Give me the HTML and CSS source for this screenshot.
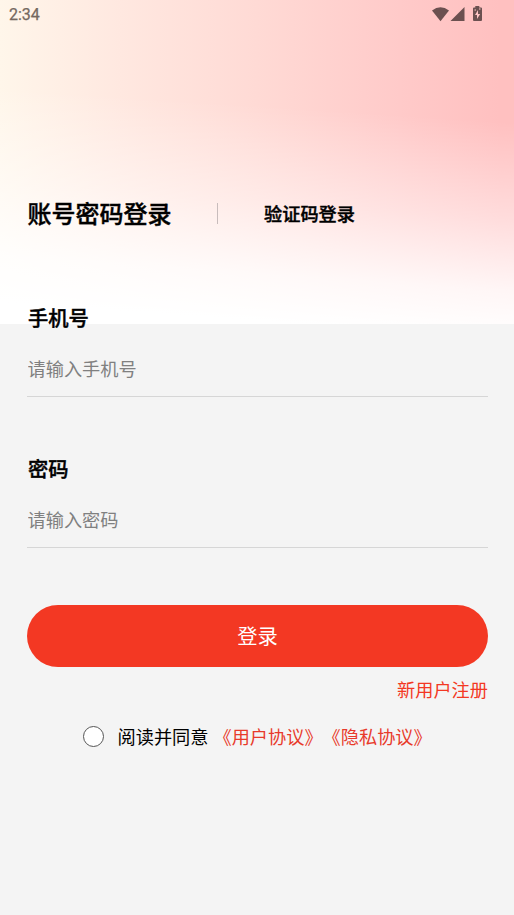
FILE: index.html
```html
<!DOCTYPE html>
<html lang="zh-CN">
<head>
<meta charset="utf-8">
<title>登录</title>
<link rel="stylesheet" href="styles.css">
</head>
<body>
<div class="screen">
  <header class="status">
    <span class="time">2:34</span>
    <svg class="status-icons" width="52" height="18" viewBox="0 0 52 18" fill="#6b5050">
      <path d="M0 4.200 Q8.500 -2.200 17 4.200 L8.500 15Z" transform="translate(0 .2)"/>
      <path d="M18.500 15 32.500 1V15Z"/>
      <path d="M43.300 0h4v1.500h1.700q1 0 1 1V14q0 1-1 1h-7q-1 0-1-1V2.500q0-1 1-1h1.300Z"/>
      <path d="M46 4 43 9h2v4l3.200-5h-2.200ZM42.500 3.500h1.500v1h-1.500ZM47 2.500h1.500v1H47Z" fill="#ffc5c5"/>
    </svg>
  </header>
  <nav class="tabs">
    <span class="tab tab-active">账号密码登录</span>
    <i class="divider"></i>
    <span class="tab">验证码登录</span>
  </nav>
  <form class="form">
    <label class="label" for="phone">手机号</label>
    <input class="input" id="phone" type="text" placeholder="请输入手机号">
    <label class="label" for="password">密码</label>
    <input class="input" id="password" type="password" placeholder="请输入密码">
    <button class="submit" type="button">登录</button>
    <a class="register">新用户注册</a>
  </form>
  <div class="agreement">
    <i class="radio"></i>
    <span class="agree-text">阅读并同意</span>
    <a>《用户协议》</a><a>《隐私协议》</a>
  </div>
</div>
</body>
</html>
```
FILE: styles.css
```css
* { box-sizing: border-box; }
body {
  margin: 0;
  background: #f4f4f4;
  color: #000;
  font-family: "Noto Sans CJK SC", sans-serif;
}
.screen {
  height: 915px;
  overflow: hidden;
  background:
    linear-gradient(184deg, rgba(255,255,255,0) 34%, rgba(255,255,255,.45) 61%, rgba(255,255,255,.86) 81%, #fff 94%) 0 0 / 514px 324px no-repeat,
    linear-gradient(90deg, #fff6ea 0, #ffe8e0 120px, #ffdad5 257px, #ffcac9 400px, #ffc0c0 500px) 0 0 / 514px 324px no-repeat;
}
.status {
  display: flex;
  justify-content: space-between;
  height: 28px;
  padding: 6px 30px 0 9px;
}
.time {
  font: 400 16px/18px Roboto, sans-serif;
  -webkit-text-stroke: .25px #746860;
  color: #746860;
}
.tabs {
  display: flex;
  align-items: center;
  height: 36px;
  margin: 167px 27px 0;
}
.tab, .label { font-weight: 500; -webkit-text-stroke: .4px #000; }
.tab { font-size: 18.200px; line-height: 36px; }
.tab-active { padding-left: .5px; margin-right: -.5px; font-size: 24px; }
.divider { width: 1px; height: 21px; margin: 0 46px; background: #c8bcbc; }
.form {
  display: flex;
  flex-direction: column;
  padding: 71px 26px 0 27px;
}
.label { padding-left: 1px; font-size: 20.300px; line-height: 30px; }
.input {
  height: 49px;
  margin: 16px 0 56px;
  padding: 0 0 8px .5px;
  border: 0;
  border-bottom: 1px solid #d6d6d6;
  border-radius: 0;
  background: none;
  font: 18.200px/27px "Noto Sans CJK SC", sans-serif;
  outline: 0;
}
#password { margin-bottom: 57px; }
.input::placeholder { color: #808080; opacity: 1; }
.submit {
  height: 62px;
  padding: 0 6px 2px;
  border: 0;
  border-radius: 31px;
  background: #f33823;
  color: #fff;
  font: 20.300px/30px "Noto Sans CJK SC", sans-serif;
}
.register {
  align-self: flex-end;
  margin-top: 9px;
  color: #f33823;
  font-size: 18.200px;
  line-height: 27px;
}
.agreement {
  display: flex;
  align-items: center;
  margin: 20px 0 0 82.500px;
  font-size: 18.200px;
  line-height: 27px;
  white-space: nowrap;
}
.agreement a { color: #e83a2b; }
.radio {
  width: 21px;
  height: 21px;
  margin-right: 14px;
  border: 1px solid #555;
  border-radius: 50%;
  background: #fff;
}
.agree-text { margin-right: 5px; }
```
